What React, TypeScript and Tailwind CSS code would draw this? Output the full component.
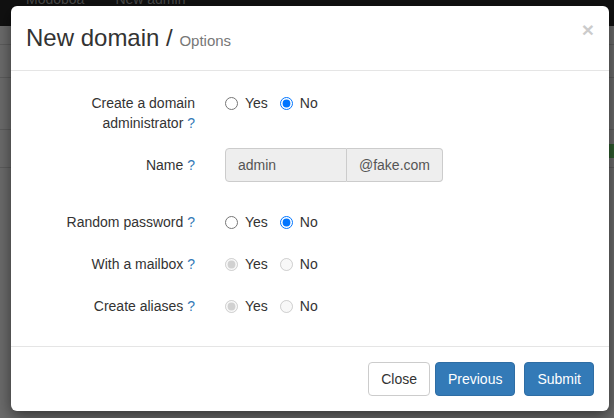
import React from "react";

type Choice = {
  label: string;
  value: "yes" | "no";
  disabled?: boolean;
};

const radioRows: Choice[] = [
  { label: "Random password", value: "no" },
  { label: "With a mailbox", value: "yes", disabled: true },
  { label: "Create aliases", value: "yes", disabled: true },
];

function Help() {
  return <span className="text-[#337ab7]"> ?</span>;
}

function YesNo({ name, value, disabled }: { name: string; value: "yes" | "no"; disabled?: boolean }) {
  return (
    <div className="flex items-center pt-[7px] leading-[20px]">
      <label className="flex items-center">
        <input
          type="radio"
          name={name}
          defaultChecked={value === "yes"}
          disabled={disabled}
          className="m-0 h-[13px] w-[13px]"
        />
        <span className="ml-[7px]">Yes</span>
      </label>
      <label className="ml-[12px] flex items-center">
        <input
          type="radio"
          name={name}
          defaultChecked={value === "no"}
          disabled={disabled}
          className="m-0 h-[13px] w-[13px]"
        />
        <span className="ml-[7px]">No</span>
      </label>
    </div>
  );
}

export default function App() {
  return (
    <div className="relative h-[418px] w-[614px] overflow-hidden bg-[#6b6b6b] font-['Liberation_Sans',Arial,sans-serif] text-[14px] text-[#333]">
      {/* page behind the backdrop */}
      <div className="relative h-[26px] bg-[#111]">
        <div className="absolute left-[26px] top-[-11px] flex gap-[31px] text-[14px] leading-[20px] text-[#4a4a4a]">
          <span>Modoboa</span>
          <span>New admin</span>
        </div>
      </div>
      <div className="h-[19px] border-b border-[#5c5c5c]" />
      <div className="h-[33px] border-b border-[#5c5c5c]" />
      <div className="h-[52px] border-b border-[#5c5c5c]" />
      <div className="relative h-[38px] border-b border-[#5c5c5c]">
        <span className="absolute right-0 top-[14px] h-[14px] w-[7px] bg-[#2e5c2e]" />
      </div>

      {/* modal */}
      <div className="absolute left-[11px] top-[6px] w-[598px] rounded-[6px] bg-white shadow-[0_5px_15px_rgba(0,0,0,0.5)]">
        <div className="flex h-[65px] items-start justify-between border-b border-[#e5e5e5] px-[15px] pt-[15px]">
          <h4 className="text-[24px] leading-[34px] text-[#333]">
            New domain / <small className="text-[15px] text-[#777]">Options</small>
          </h4>
          <button
            type="button"
            className="mt-[-2px] text-[21px] font-bold leading-[21px] text-[#000] opacity-20"
            aria-label="Close"
          >
            ×
          </button>
        </div>

        <div className="px-[15px] py-[15px]">
          <div className="mb-[15px] flex">
            <div className="w-[169px] pt-[7px] text-right leading-[20px]">
              Create a domain
              <br />
              administrator<Help />
            </div>
            <div className="ml-[30px]">
              <YesNo name="create_dom_admin" value="no" />
            </div>
          </div>

          <div className="mb-[23px] flex">
            <div className="w-[169px] pt-[7px] text-right leading-[20px]">
              Name<Help />
            </div>
            <div className="ml-[30px] flex h-[34px] w-[218px] text-[#555]">
              <div className="flex w-[122px] items-center rounded-l-[4px] border border-[#ccc] bg-[#eee] px-[12px]">
                admin
              </div>
              <div className="flex w-[96px] items-center justify-center rounded-r-[4px] border border-l-0 border-[#ccc] bg-[#eee]">
                @fake.com
              </div>
            </div>
          </div>

          {radioRows.map((row, i) => (
            <div key={row.label} className="mb-[15px] flex">
              <div className="w-[169px] pt-[7px] text-right leading-[20px]">
                {row.label}
                <Help />
              </div>
              <div className="ml-[30px]">
                <YesNo name={`row_${i}`} value={row.value} disabled={row.disabled} />
              </div>
            </div>
          ))}
        </div>

        <div className="flex justify-end border-t border-[#e5e5e5] p-[15px] leading-[20px]">
          <button
            type="button"
            className="h-[34px] rounded-[4px] border border-[#ccc] bg-white px-[12px] text-[#333]"
          >
            Close
          </button>
          <button
            type="button"
            className="ml-[5px] h-[34px] rounded-[4px] border border-[#2e6da4] bg-[#337ab7] px-[12px] text-white"
          >
            Previous
          </button>
          <button
            type="button"
            className="ml-[9px] h-[34px] rounded-[4px] border border-[#2e6da4] bg-[#337ab7] px-[12px] text-white"
          >
            Submit
          </button>
        </div>
      </div>
    </div>
  );
}
